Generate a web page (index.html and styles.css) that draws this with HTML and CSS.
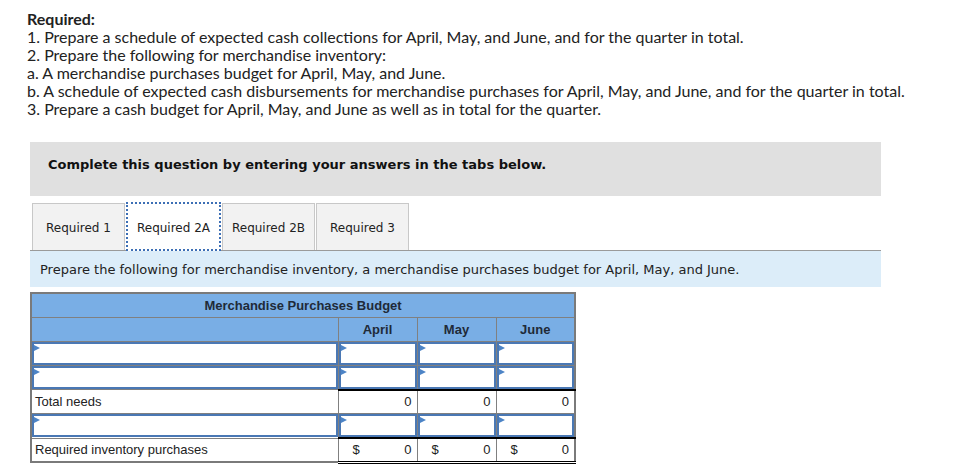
FILE: index.html
```html
<!DOCTYPE html>
<html lang="en">
<head>
<meta charset="utf-8">
<title>Merchandise Purchases Budget</title>
<link rel="stylesheet" href="styles.css">
</head>
<body>
<div class="page">
  <div class="required">
    <p class="req-title">Required:</p>
    <p>1. Prepare a schedule of expected cash collections for April, May, and June, and for the quarter in total.</p>
    <p>2. Prepare the following for merchandise inventory:</p>
    <p>a. A merchandise purchases budget for April, May, and June.</p>
    <p>b. A schedule of expected cash disbursements for merchandise purchases for April, May, and June, and for the quarter in total.</p>
    <p>3. Prepare a cash budget for April, May, and June as well as in total for the quarter.</p>
  </div>

  <div class="section">
    <div class="instructions">Complete this question by entering your answers in the tabs below.</div>

    <div class="tabs">
      <div class="tab">Required 1</div>
      <div class="tab active">Required 2A</div>
      <div class="tab">Required 2B</div>
      <div class="tab">Required 3</div>
    </div>

    <div class="prompt">Prepare the following for merchandise inventory, a merchandise purchases budget for April, May, and June.</div>

    <table class="budget">
      <colgroup>
        <col class="c-label"><col class="c-num"><col class="c-num"><col class="c-num">
      </colgroup>
      <thead>
        <tr><th colspan="4" class="title">Merchandise Purchases Budget</th></tr>
        <tr><th></th><th>April</th><th>May</th><th>June</th></tr>
      </thead>
      <tbody>
        <tr>
          <td class="in"><div class="field"></div></td>
          <td class="in"><div class="field"></div></td>
          <td class="in"><div class="field"></div></td>
          <td class="in"><div class="field"></div></td>
        </tr>
        <tr>
          <td class="in"><div class="field"></div></td>
          <td class="in"><div class="field"></div></td>
          <td class="in"><div class="field"></div></td>
          <td class="in"><div class="field"></div></td>
        </tr>
        <tr>
          <td class="label">Total needs</td>
          <td class="val total">0</td>
          <td class="val total">0</td>
          <td class="val total">0</td>
        </tr>
        <tr>
          <td class="in"><div class="field"></div></td>
          <td class="in"><div class="field"></div></td>
          <td class="in"><div class="field"></div></td>
          <td class="in"><div class="field"></div></td>
        </tr>
        <tr>
          <td class="label">Required inventory purchases</td>
          <td class="val grand"><span>$</span><span>0</span></td>
          <td class="val grand"><span>$</span><span>0</span></td>
          <td class="val grand"><span>$</span><span>0</span></td>
        </tr>
      </tbody>
    </table>
  </div>
</div>
</body>
</html>
```

FILE: styles.css
```css
* { box-sizing: border-box; }

html, body {
  margin: 0;
  padding: 0;
  background: #fff;
}

.page {
  padding-top: 10px;
}

.required {
  padding-left: 27px;
  font-family: "Lato", "Liberation Sans", sans-serif;
  font-size: 16px;
  line-height: 18px;
  color: #222;
}

.required p {
  margin: 0;
}

.req-title {
  font-weight: bold;
}

.section {
  margin-left: 30px;
  width: 851px;
  margin-top: 24px;
}

.instructions {
  height: 54px;
  background: #e0e0e0;
  padding: 15px 18px 0;
  font-family: "DejaVu Sans", Verdana, sans-serif;
  font-weight: bold;
  font-size: 13px;
  line-height: 16px;
  color: #111;
}

.tabs {
  display: flex;
  margin-top: 7px;
  padding-left: 2px;
  height: 47px;
  border-bottom: 1px solid #9a9a9a;
  box-sizing: content-box;
}

.tab {
  width: 93px;
  height: 47px;
  margin-right: 1px;
  padding-top: 2px;
  background: #f2f2f2;
  border: 1px solid #c8c8c8;
  border-bottom: none;
  font-family: "DejaVu Sans", Verdana, sans-serif;
  font-size: 12px;
  color: #222;
  display: flex;
  align-items: center;
  justify-content: center;
}

.tab.active {
  background: #fff;
  border: 2px dotted #3d6fb5;
  height: 49px;
  margin-top: -1px;
  width: 95px;
}

.prompt {
  height: 36px;
  background: #dcedf9;
  padding-left: 10px;
  padding-top: 1px;
  font-family: "DejaVu Sans", Verdana, sans-serif;
  font-size: 13px;
  color: #222;
  display: flex;
  align-items: center;
}

.budget {
  margin-top: 5px;
  border-collapse: collapse;
  width: 545px;
  table-layout: fixed;
  border: 2px solid #7a7a7a;
  font-family: "Liberation Sans", Arial, sans-serif;
  font-size: 13px;
  color: #222;
}

.c-label { width: 307px; }
.c-num { width: 79px; }

.budget th,
.budget td {
  border: 1px solid #808080;
  height: 24px;
  padding: 0;
}

.budget th {
  background: #79aee5;
  font-size: 13px;
  font-weight: bold;
  color: #1f2a38;
  text-align: center;
}

.budget td.in {
  padding: 0;
}

.field {
  position: relative;
  height: 23px;
  border: 2px solid #4a78b4;
  background: #fff;
}

.field::before {
  content: "";
  position: absolute;
  left: 0;
  top: 1px;
  border-left: 6px solid #4d84c6;
  border-top: 3px solid transparent;
  border-bottom: 3px solid transparent;
}

.budget td.label {
  padding-left: 3px;
}

.budget td.val {
  text-align: right;
  padding-right: 5px;
}

.budget td.total {
  border-top: 2px solid #000;
}

.budget td.grand {
  border-top: 2px solid #000;
  border-bottom: 3px double #000;
  padding-left: 14px;
}

.budget td.grand span:first-child {
  float: left;
}
```
